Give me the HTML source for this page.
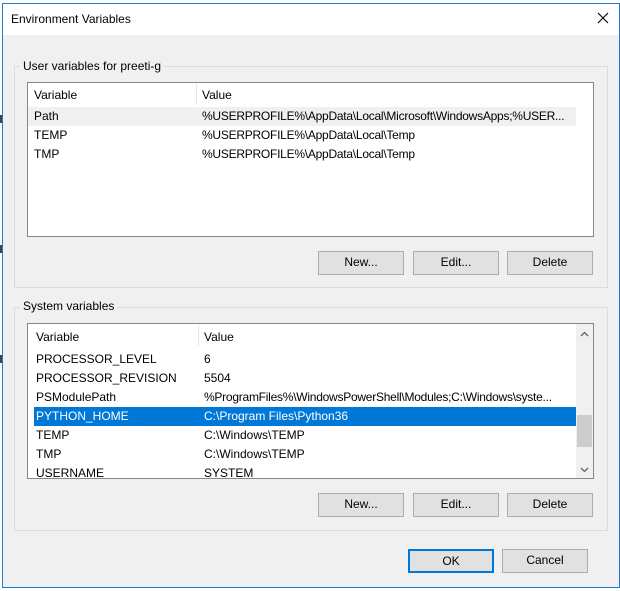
<!DOCTYPE html>
<html><head><style>
*{box-sizing:border-box;margin:0;padding:0}
body{width:620px;height:591px;background:#fff;position:relative;overflow:hidden;font-family:"Liberation Sans",sans-serif;font-size:12px;color:#000}
.a{position:absolute}
.dlg{left:2px;top:3px;width:618px;height:585px;border:1px solid #1e7ad0;background:#f0f0f0}
.title{left:0;top:0;width:616px;height:31px;background:#fff}
.grp{border:1px solid #dcdcdc}
.lbl{background:#f0f0f0;padding:0 3px}
.list{background:#fff;border:1px solid #828790}
.btn{background:#e1e1e1;border:1px solid #adadad;text-align:center;line-height:21px}
.row{height:19px;line-height:19px;white-space:nowrap}
.v{letter-spacing:-0.25px}
</style></head><body>
<div class="a" style="left:0;top:115px;width:2px;height:8px;background:#444"></div>
<div class="a" style="left:0;top:245px;width:2px;height:8px;background:#444"></div>
<div class="a" style="left:0;top:355px;width:2px;height:8px;background:#444"></div>
<div class="a dlg">
<div class="a title"><span class="a" style="left:8px;top:8px">Environment Variables</span>
<svg class="a" style="left:594px;top:8px" width="12" height="12"><path d="M1 1L11 11M11 1L1 11" stroke="#000" stroke-width="1.1"/></svg></div>

<div class="a grp" style="left:11px;top:62px;width:594px;height:222px"></div>
<span class="a lbl" style="left:17px;top:55px">User variables for preeti-g</span>
<div class="a list" style="left:24px;top:78px;width:567px;height:155px">
 <div class="a" style="left:0;top:0;width:548px;height:23px;background:#fff"><span class="a" style="left:6px;top:5px">Variable</span><span class="a" style="left:174px;top:5px">Value</span><div class="a" style="left:168px;top:1px;width:1px;height:21px;background:#e5e5e5"></div></div>
 <div class="a row" style="left:0;top:24px;width:548px;background:#f0f0f0"><span class="a" style="left:6px">Path</span><span class="a v" style="left:174px">%USERPROFILE%\AppData\Local\Microsoft\WindowsApps;%USER...</span></div>
 <div class="a row" style="left:0;top:43px"><span class="a" style="left:6px">TEMP</span><span class="a v" style="left:174px">%USERPROFILE%\AppData\Local\Temp</span></div>
 <div class="a row" style="left:0;top:62px"><span class="a" style="left:6px">TMP</span><span class="a v" style="left:174px">%USERPROFILE%\AppData\Local\Temp</span></div>
</div>
<div class="a btn" style="left:315px;top:247px;width:86px;height:24px">New...</div>
<div class="a btn" style="left:410px;top:247px;width:86px;height:24px">Edit...</div>
<div class="a btn" style="left:504px;top:247px;width:86px;height:24px">Delete</div>

<div class="a grp" style="left:11px;top:303px;width:594px;height:224px"></div>
<span class="a lbl" style="left:17px;top:295px">System variables</span>
<div class="a list" style="left:24px;top:319px;width:567px;height:156px;overflow:hidden">
 <div class="a" style="left:0;top:0;width:548px;height:23px"><span class="a" style="left:8px;top:6px">Variable</span><span class="a" style="left:176px;top:6px">Value</span><div class="a" style="left:170px;top:1px;width:1px;height:21px;background:#e5e5e5"></div></div>
 <div class="a row" style="top:26px;width:548px"><span class="a" style="left:8px">PROCESSOR_LEVEL</span><span class="a" style="left:176px">6</span></div>
 <div class="a row" style="top:45px;width:548px"><span class="a" style="left:8px">PROCESSOR_REVISION</span><span class="a" style="left:176px">5504</span></div>
 <div class="a row" style="top:64px;width:548px"><span class="a" style="left:8px">PSModulePath</span><span class="a v" style="left:176px">%ProgramFiles%\WindowsPowerShell\Modules;C:\Windows\syste...</span></div>
 <div class="a row" style="left:6px;top:83px;width:542px;background:#0078d7;color:#fff"><span class="a" style="left:2px">PYTHON_HOME</span><span class="a" style="left:170px">C:\Program Files\Python36</span></div>
 <div class="a row" style="top:102px;width:548px"><span class="a" style="left:8px">TEMP</span><span class="a" style="left:176px">C:\Windows\TEMP</span></div>
 <div class="a row" style="top:121px;width:548px"><span class="a" style="left:8px">TMP</span><span class="a" style="left:176px">C:\Windows\TEMP</span></div>
 <div class="a row" style="top:140px;width:548px"><span class="a" style="left:8px">USERNAME</span><span class="a" style="left:176px">SYSTEM</span></div>
 <div class="a" style="left:548px;top:0;width:17px;height:154px;background:#f0f0f0">
  <svg class="a" style="left:4px;top:7px" width="9" height="6"><path d="M1 5L4.5 1.5L8 5" stroke="#606060" stroke-width="1.3" fill="none"/></svg>
  <div class="a" style="left:1px;top:91px;width:15px;height:32px;background:#cdcdcd"></div>
  <svg class="a" style="left:4px;top:143px" width="9" height="6"><path d="M1 1L4.5 4.5L8 1" stroke="#606060" stroke-width="1.3" fill="none"/></svg>
 </div>
</div>
<div class="a btn" style="left:315px;top:489px;width:86px;height:24px">New...</div>
<div class="a btn" style="left:410px;top:489px;width:86px;height:24px">Edit...</div>
<div class="a btn" style="left:504px;top:489px;width:86px;height:24px">Delete</div>

<div class="a btn" style="left:405px;top:545px;width:86px;height:24px;border:2px solid #0078d7;line-height:20px">OK</div>
<div class="a btn" style="left:499px;top:545px;width:86px;height:24px">Cancel</div>
</div>
</body></html>
